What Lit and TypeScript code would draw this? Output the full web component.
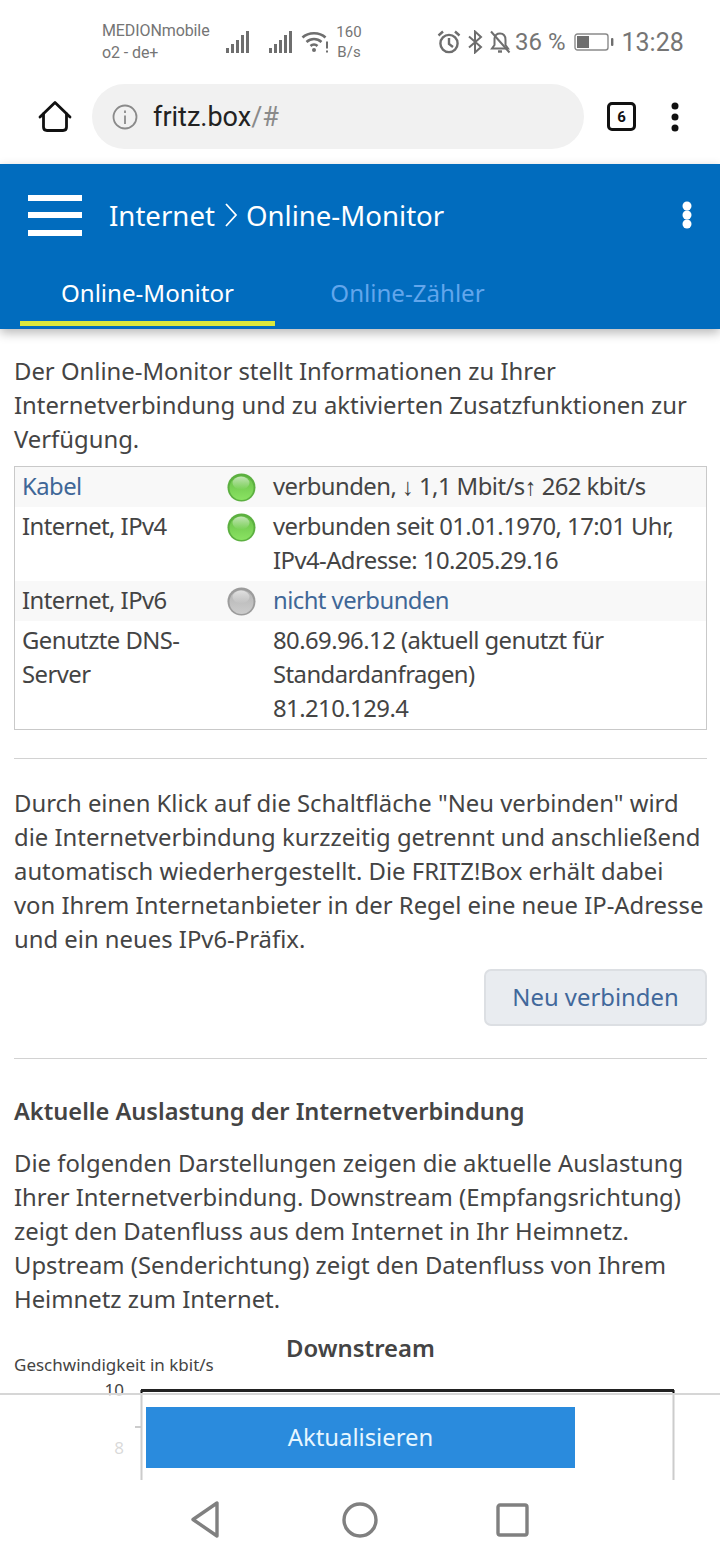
import { LitElement, html, css, svg } from "lit";
import { customElement } from "lit/decorators.js";

const signal = svg`
  <rect x="0" y="17" width="3" height="5"/>
  <rect x="5" y="13" width="3" height="9"/>
  <rect x="10" y="9" width="3" height="13"/>
  <rect x="15" y="4" width="3" height="18"/>
  <rect x="20" y="0" width="3" height="22"/>`;

@customElement("status-bar")
class StatusBar extends LitElement {
  static styles = css`
    :host {
      display: block;
      height: 84px;
      font-family: Roboto, sans-serif;
      color: #757575;
    }
    .bar {
      display: flex;
      align-items: center;
      height: 84px;
      padding-left: 102px;
      box-sizing: border-box;
    }
    .carrier {
      width: 124px;
      font-size: 16px;
      line-height: 22px;
      letter-spacing: -0.1px;
    }
    .signal {
      width: 23px;
      height: 22px;
      fill: #6e6e6e;
    }
    .signal.second {
      margin-left: 20px;
    }
    .wifi {
      width: 28px;
      height: 22px;
      margin-left: 9px;
    }
    .speed {
      width: 30px;
      margin-left: 5px;
      font-size: 15px;
      line-height: 20px;
      text-align: center;
    }
    .alarm {
      width: 24px;
      height: 24px;
      margin-left: 73px;
    }
    .bt {
      width: 16px;
      height: 24px;
      margin-left: 6px;
    }
    .bell {
      width: 22px;
      height: 24px;
      margin-left: 6px;
    }
    .pct {
      margin-left: 4px;
      font-size: 24px;
      white-space: nowrap;
    }
    .battery {
      width: 40px;
      height: 18px;
      margin-left: 8px;
    }
    .time {
      margin-left: 8px;
      font-size: 25px;
    }
  `;

  render() {
    return html`
      <div class="bar">
        <div class="carrier">MEDIONmobile<br />o2 - de+</div>
        <svg class="signal" viewBox="0 0 23 22">${signal}</svg>
        <svg class="signal second" viewBox="0 0 23 22">${signal}</svg>
        <svg class="wifi" viewBox="0 0 28 22" fill="none" stroke="#6e6e6e" stroke-width="2.6">
          <path d="M1.5 6.5C7.5 0.8 18.5 0.8 24.5 6.5" />
          <path d="M5.5 11C10 7 16 7 20.5 11" />
          <path d="M9.5 15C11.5 13.2 14.5 13.2 16.5 15" />
          <circle cx="13" cy="19" r="2" fill="#6e6e6e" stroke="none" />
          <path d="M26 10.5v7M26 19.5v2" stroke-width="2" />
        </svg>
        <div class="speed">160<br />B/s</div>
        <svg class="alarm" viewBox="0 0 24 24" fill="none" stroke="#6e6e6e" stroke-width="2.4">
          <circle cx="12" cy="13.5" r="8.6" />
          <path d="M12 8v6l4 3M1.5 5.5L6 1.5M22.5 5.5L18 1.5" />
        </svg>
        <svg class="bt" viewBox="0 0 16 24" fill="none" stroke="#6e6e6e" stroke-width="2">
          <path d="M2 6.5L14 17 8 22.5V1.5L14 7 2 17.5" />
        </svg>
        <svg class="bell" viewBox="0 0 22 24" fill="none" stroke="#6e6e6e" stroke-width="2">
          <path d="M5.5 8.5C6 5 8 3.5 11 3.5 15 3.5 16.5 6.5 16.5 10V15L19 18.5H3L5.5 15Z" />
          <path d="M2 1.5L20.5 22.5" />
          <path d="M9 21.5H13" stroke-width="2.4" />
        </svg>
        <span class="pct">36 %</span>
        <svg class="battery" viewBox="0 0 40 18">
          <rect x="1" y="1" width="33" height="16" rx="2.5" fill="none" stroke="#8a8a8a" stroke-width="1.4" />
          <rect x="3" y="3" width="12" height="12" fill="#6e6e6e" />
          <rect x="37" y="5" width="2.4" height="8" rx="1" fill="#6e6e6e" />
        </svg>
        <span class="time">13:28</span>
      </div>
    `;
  }
}

@customElement("browser-bar")
class BrowserBar extends LitElement {
  static styles = css`
    :host {
      display: block;
      height: 80px;
      font-family: Roboto, sans-serif;
    }
    .bar {
      display: flex;
      align-items: center;
      height: 65px;
    }
    .home {
      width: 34px;
      height: 34px;
      margin-left: 38px;
    }
    .url {
      display: flex;
      align-items: center;
      width: 492px;
      height: 65px;
      margin-left: 20px;
      border-radius: 33px;
      background: #f1f1f1;
      font-size: 27px;
      color: #222;
    }
    .url svg {
      width: 26px;
      height: 26px;
      margin-left: 20px;
      margin-right: 15px;
    }
    .url span {
      color: #8a8a8a;
    }
    .tabs {
      display: flex;
      align-items: center;
      justify-content: center;
      box-sizing: border-box;
      width: 29px;
      height: 29px;
      margin-left: 23px;
      border: 3px solid #111;
      border-radius: 5px;
      font-size: 15px;
      font-weight: 700;
      color: #111;
    }
    .more {
      width: 8px;
      height: 30px;
      margin-left: 35px;
    }
  `;

  render() {
    return html`
      <div class="bar">
        <svg class="home" viewBox="0 0 34 34" fill="none" stroke="#111" stroke-width="2.8" stroke-linecap="round" stroke-linejoin="round">
          <path d="M2 17L17 2.5 32 17" />
          <path d="M5.5 14V27C5.5 29.5 7 30.5 9 30.5H25C27 30.5 28.5 29.5 28.5 27V14" />
        </svg>
        <div class="url">
          <svg viewBox="0 0 26 26" fill="none" stroke="#8a8a8a" stroke-width="1.8">
            <circle cx="13" cy="13" r="11.5" />
            <path d="M13 11.5V20M13 6.5V9" />
          </svg>
          fritz.box<span>/#</span>
        </div>
        <div class="tabs">6</div>
        <svg class="more" viewBox="0 0 8 30" fill="#111">
          <circle cx="4" cy="4" r="3.5" />
          <circle cx="4" cy="15" r="3.5" />
          <circle cx="4" cy="26" r="3.5" />
        </svg>
      </div>
    `;
  }
}

@customElement("page-header")
class PageHeader extends LitElement {
  static styles = css`
    :host {
      display: block;
      position: relative;
      z-index: 2;
      height: 165px;
      background: #016cbe;
      box-shadow: 0 4px 10px rgba(0, 0, 0, 0.28);
      font-family: "Noto Sans", sans-serif;
    }
    .top {
      display: flex;
      align-items: center;
      box-sizing: border-box;
      height: 104px;
      padding-bottom: 2px;
    }
    .burger {
      display: flex;
      flex-direction: column;
      gap: 11.5px;
      width: 54px;
      margin-left: 28px;
    }
    .burger i {
      display: block;
      height: 6px;
      background: #fff;
    }
    .title {
      display: flex;
      align-items: center;
      flex: 1;
      margin-left: 27px;
      font-size: 27.6px;
      color: #fff;
    }
    .title svg {
      width: 14px;
      height: 26px;
      margin: 0 8px 0 9px;
    }
    .dots {
      width: 12px;
      height: 28px;
      margin-right: 27px;
    }
    .tabs {
      display: flex;
      height: 58px;
      margin-left: 20px;
    }
    .tab {
      box-sizing: border-box;
      height: 58px;
      padding-top: 7px;
      text-align: center;
      font-size: 24.1px;
      line-height: 36px;
    }
    .tab.active {
      width: 255px;
      color: #fff;
      border-bottom: 5px solid #d9e83b;
    }
    .tab.idle {
      width: 265px;
      color: #62a6ec;
    }
  `;

  render() {
    return html`
      <div class="top">
        <div class="burger"><i></i><i></i><i></i></div>
        <div class="title">
          Internet
          <svg viewBox="0 0 14 26" fill="none" stroke="#fff" stroke-width="1.8"><path d="M2 2L12 13 2 24" /></svg>
          Online-Monitor
        </div>
        <svg class="dots" viewBox="0 0 12 28" fill="#fff">
          <circle cx="6" cy="5" r="4.5" />
          <circle cx="6" cy="14" r="4.5" />
          <circle cx="6" cy="23" r="4.5" />
        </svg>
      </div>
      <div class="tabs">
        <div class="tab active">Online-Monitor</div>
        <div class="tab idle">Online-Zähler</div>
      </div>
    `;
  }
}

@customElement("status-table")
class StatusTable extends LitElement {
  static styles = css`
    :host {
      display: block;
    }
    table {
      width: 100%;
      table-layout: fixed;
      border: 1px solid #c9c9c9;
      border-collapse: separate;
      border-spacing: 0;
      letter-spacing: -0.55px;
    }
    col.name {
      width: 204px;
    }
    col.state {
      width: 54px;
    }
    tr.shade td {
      background: #f8f8f8;
    }
    td {
      padding: 2px 0 4px;
      vertical-align: top;
    }
    td:first-child {
      padding-left: 7px;
    }
    td.led {
      padding-left: 8px;
    }
    td.led svg {
      display: block;
      width: 29px;
      height: 29px;
      margin-top: 4px;
    }
    .link {
      color: #3f6797;
    }
  `;

  led(id: string, ring: string, ball: string, glow: string) {
    return html`
      <svg viewBox="0 0 29 29">
        <defs>
          <linearGradient id="${id}b" x1="0" y1="0" x2="0" y2="1">
            <stop offset="0" stop-color=${ball} />
            <stop offset="1" stop-color=${glow} />
          </linearGradient>
          <linearGradient id="${id}s" x1="0" y1="0" x2="0" y2="1">
            <stop offset="0" stop-color="#fff" stop-opacity="0.6" />
            <stop offset="1" stop-color="#fff" stop-opacity="0" />
          </linearGradient>
        </defs>
        <circle cx="14.5" cy="14.5" r="14" fill=${ring} />
        <circle cx="14.5" cy="15" r="12" fill="url(#${id}b)" />
        <ellipse cx="14" cy="10" rx="8.5" ry="6.5" fill="url(#${id}s)" />
      </svg>
    `;
  }

  render() {
    return html`
      <table>
        <colgroup><col class="name" /><col class="state" /><col /></colgroup>
        <tr class="shade">
          <td class="link">Kabel</td>
          <td class="led">${this.led("g1", "#5cb040", "#68c048", "#8ae262")}</td>
          <td>verbunden, ↓ 1,1 Mbit/s↑ 262 kbit/s</td>
        </tr>
        <tr>
          <td>Internet, IPv4</td>
          <td class="led">${this.led("g2", "#5cb040", "#68c048", "#8ae262")}</td>
          <td>verbunden seit 01.01.1970, 17:01 Uhr,<br />IPv4-Adresse: 10.205.29.16</td>
        </tr>
        <tr class="shade">
          <td>Internet, IPv6</td>
          <td class="led">${this.led("g3", "#9c9c9c", "#b4b4b4", "#cccccc")}</td>
          <td class="link">nicht verbunden</td>
        </tr>
        <tr>
          <td>Genutzte DNS-<br />Server</td>
          <td class="led"></td>
          <td>80.69.96.12 (aktuell genutzt für<br />Standardanfragen)<br />81.210.129.4</td>
        </tr>
      </table>
    `;
  }
}

@customElement("app-root")
class AppRoot extends LitElement {
  static styles = css`
    :host {
      display: block;
      position: relative;
      width: 720px;
      height: 1560px;
      overflow: hidden;
      background: #fff;
    }
    main {
      padding: 25px 13px 0 14px;
      font-family: "Noto Sans", sans-serif;
      font-size: 23.85px;
      line-height: 34px;
      color: #444;
    }
    p {
      margin: 0;
    }
    status-table {
      margin-top: 10px;
    }
    hr {
      height: 1px;
      margin: 0;
      border: 0;
      background: #d2d2d2;
    }
    .rule1 {
      margin-top: 28px;
    }
    .reconnect {
      margin-top: 27px;
    }
    .actions {
      display: flex;
      justify-content: flex-end;
      margin-top: 13px;
    }
    .actions button {
      width: 223px;
      height: 57px;
      padding: 0 0 2px;
      border: 2px solid #dcdfe3;
      border-radius: 7px;
      background: #e9ecf0;
      color: #41689b;
      font: inherit;
    }
    .rule2 {
      margin-top: 32px;
    }
    h2 {
      margin: 35px 0 0;
      font-size: 23.6px;
      font-weight: 600;
      line-height: 34px;
    }
    .usage {
      margin-top: 18px;
    }
    .chart-title {
      margin-top: 15px;
      text-align: center;
      font-weight: 600;
    }
    .chart {
      display: block;
      margin: -20px -13px 0 -14px;
    }
    .chart text {
      font-family: "Noto Sans", sans-serif;
      fill: #444;
    }
    .overlay {
      position: absolute;
      left: 0;
      right: 0;
      top: 1393px;
      height: 85px;
      border-top: 2px solid #d6d6d6;
      background: rgba(255, 255, 255, 0.8);
    }
    .overlay button {
      display: block;
      width: 429px;
      height: 61px;
      margin: 12px 0 0 146px;
      padding: 0 0 2px;
      border: 0;
      background: #2a8bdd;
      color: #e6f6ff;
      font-family: "Noto Sans", sans-serif;
      font-size: 23.85px;
    }
    nav {
      position: absolute;
      left: 0;
      right: 0;
      top: 1480px;
      height: 80px;
      display: flex;
      align-items: flex-start;
      background: #fff;
    }
    nav svg {
      width: 40px;
      height: 40px;
      margin-top: 20px;
    }
    nav svg:nth-child(1) {
      margin-left: 186px;
    }
    nav svg:nth-child(2) {
      margin-left: 114px;
    }
    nav svg:nth-child(3) {
      margin-left: 112px;
    }
  `;

  render() {
    return html`
      <status-bar></status-bar>
      <browser-bar></browser-bar>
      <page-header></page-header>
      <main>
        <p>Der Online-Monitor stellt Informationen zu Ihrer Internetverbindung und zu aktivierten Zusatzfunktionen zur Verfügung.</p>
        <status-table></status-table>
        <hr class="rule1" />
        <p class="reconnect">Durch einen Klick auf die Schaltfläche "Neu verbinden" wird die Internetverbindung kurzzeitig getrennt und anschließend automatisch wiederhergestellt. Die FRITZ!Box erhält dabei von Ihrem Internetanbieter in der Regel eine neue IP-Adresse und ein neues IPv6-Präfix.</p>
        <div class="actions"><button>Neu verbinden</button></div>
        <hr class="rule2" />
        <h2>Aktuelle Auslastung der Internetverbindung</h2>
        <p class="usage">Die folgenden Darstellungen zeigen die aktuelle Auslastung Ihrer Internetverbindung. Downstream (Empfangsrichtung) zeigt den Datenfluss aus dem Internet in Ihr Heimnetz. Upstream (Senderichtung) zeigt den Datenfluss von Ihrem Heimnetz zum Internet.</p>
        <div class="chart-title">Downstream</div>
        <svg class="chart" width="720" height="160" viewBox="0 0 720 160">
          <text x="14" y="26" font-size="17">Geschwindigkeit in kbit/s</text>
          <text x="124" y="51" font-size="17" text-anchor="end">10</text>
          <text x="124" y="109" font-size="17" text-anchor="end">8</text>
          <path d="M141.5 45V160M673.5 45V160M135 82H141" stroke="#000" stroke-width="2" fill="none" />
          <path d="M141 45.5H674" stroke="#222" stroke-width="3" />
        </svg>
      </main>
      <div class="overlay"><button>Aktualisieren</button></div>
      <nav>
        <svg viewBox="0 0 40 40" fill="none" stroke="#808080" stroke-width="3.4" stroke-linejoin="round">
          <path d="M31 3V36L7 19.5Z" />
        </svg>
        <svg viewBox="0 0 40 40" fill="none" stroke="#808080" stroke-width="3.4"><circle cx="20" cy="20" r="16" /></svg>
        <svg viewBox="0 0 40 40" fill="none" stroke="#808080" stroke-width="3.4" stroke-linejoin="round">
          <rect x="6" y="5" width="29" height="30" rx="2" />
        </svg>
      </nav>
    `;
  }
}
